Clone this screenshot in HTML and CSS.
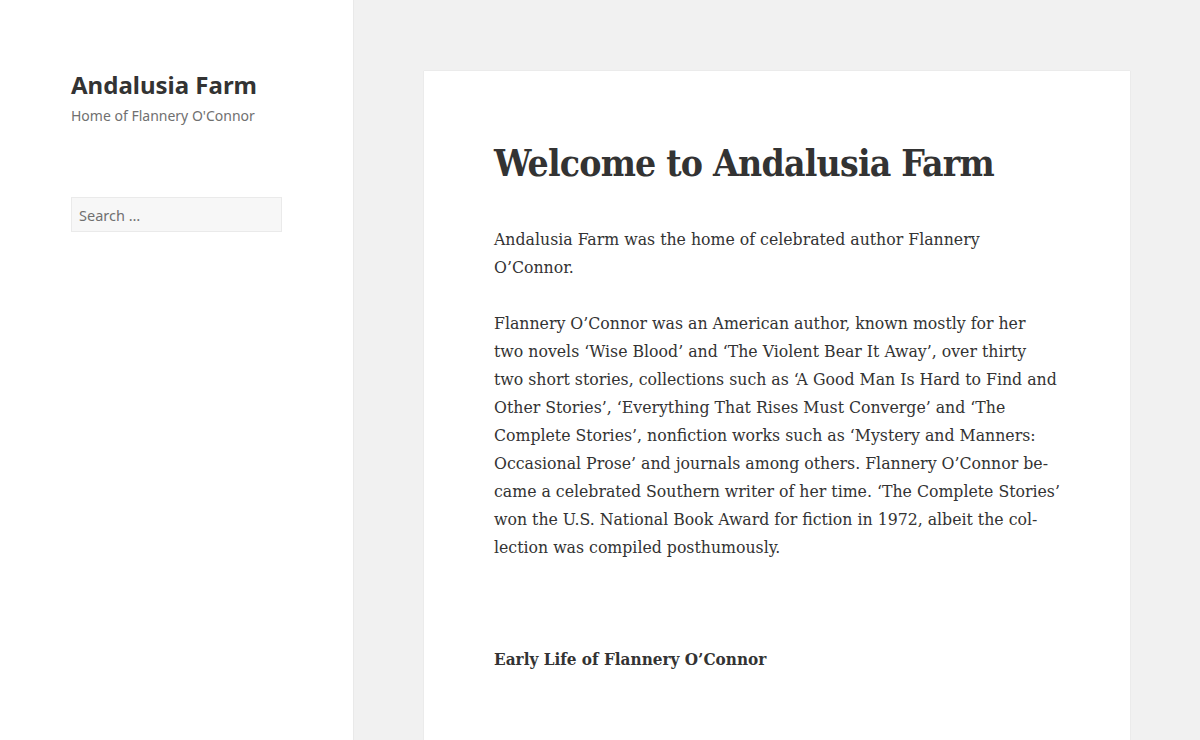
FILE: index.html
```html
<!DOCTYPE html>
<html lang="en">
<head>
<meta charset="utf-8">
<title>Andalusia Farm</title>
<link rel="stylesheet" href="styles.css">
</head>
<body>
<div class="site">
  <aside class="sidebar">
    <header class="site-header">
      <p class="site-title">Andalusia Farm</p>
      <p class="site-description">Home of Flannery O'Connor</p>
    </header>
    <form class="search-form">
      <input class="search-field" type="search" placeholder="Search …">
    </form>
  </aside>
  <main class="content">
    <article class="entry">
      <h1 class="entry-title">Welcome to Andalusia Farm</h1>
      <div class="entry-content">
        <p>Andalusia Farm was the home of celebrated author Flannery<br>O’Connor.</p>
        <p>Flannery O’Connor was an American author, known mostly for her<br>two novels ‘Wise Blood’ and ‘The Violent Bear It Away’, over thirty<br>two short stories, collections such as ‘A Good Man Is Hard to Find and<br>Other Stories’, ‘Everything That Rises Must Converge’ and ‘The<br>Complete Stories’, nonfiction works such as ‘Mystery and Manners:<br>Occasional Prose’ and journals among others. Flannery O’Connor be-<br>came a celebrated Southern writer of her time. ‘The Complete Stories’<br>won the U.S. National Book Award for fiction in 1972, albeit the col-<br>lection was compiled posthumously.</p>
        <h2 class="section-title">Early Life of Flannery O’Connor</h2>
      </div>
    </article>
  </main>
</div>
</body>
</html>
```

FILE: styles.css
```css
html, body {
  margin: 0;
  padding: 0;
}
body {
  background: #f1f1f1;
  color: #333333;
  font-family: "Noto Sans", sans-serif;
  height: 740px;
  overflow: hidden;
}
.site {
  display: flex;
  align-items: stretch;
  min-height: 740px;
}
.sidebar {
  width: 353px;
  flex: 0 0 353px;
  background: #ffffff;
  box-shadow: 0 0 1px rgba(0, 0, 0, 0.2);
  padding: 70px 71px 0 71px;
  box-sizing: border-box;
}
.site-header {
  margin: 0;
}
.site-title {
  margin: 0;
  font-family: "Noto Sans", sans-serif;
  font-weight: 700;
  font-size: 24px;
  line-height: 30px;
  color: #333333;
}
.site-description {
  margin: 5px 0 0 0;
  font-family: "Noto Sans", sans-serif;
  font-size: 14px;
  line-height: 22px;
  color: #707070;
}
.search-form {
  margin-top: 70px;
}
.search-field {
  display: block;
  box-sizing: border-box;
  width: 211px;
  height: 35px;
  margin: 0;
  padding: 0 7px;
  background: #f7f7f7;
  border: 1px solid #eaeaea;
  border-radius: 0;
  font-family: "Noto Sans", sans-serif;
  font-size: 14.5px;
  color: #333333;
  outline: none;
}
.search-field::placeholder {
  color: #707070;
  opacity: 1;
}
.content {
  flex: 1;
  padding: 71px 70px 0 71px;
}
.entry {
  width: 706px;
  min-height: 700px;
  background: #ffffff;
  box-shadow: 0 0 1px rgba(0, 0, 0, 0.15);
  padding: 68px 70px 0 70px;
  box-sizing: border-box;
}
.entry-title {
  margin: 0 0 38px 0;
  font-family: "DejaVu Serif Condensed", "Liberation Serif", serif;
  font-weight: 700;
  font-size: 37px;
  letter-spacing: -0.8px;
  line-height: 48px;
  color: #333333;
  white-space: nowrap;
}
.entry-content p {
  margin: 0 0 28px 0;
  font-family: "DejaVu Serif Condensed", "Liberation Serif", serif;
  font-size: 17.5px;
  line-height: 28px;
  color: #333333;
  white-space: nowrap;
}
.section-title {
  margin: 84px 0 0 0;
  font-family: "DejaVu Serif Condensed", "Liberation Serif", serif;
  font-weight: 700;
  font-size: 17px;
  line-height: 28px;
  color: #333333;
}
```
